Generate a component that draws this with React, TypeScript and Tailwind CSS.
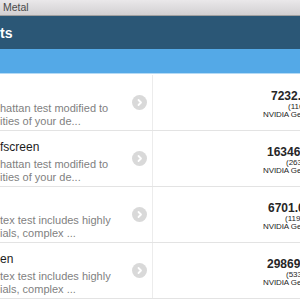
import React from "react";

type Row = {
  title: string;
  d1: string;
  d2: string;
  num: string;
  numPl: string;
  sub: string;
  subPl: string;
};

const rows: Row[] = [
  { title: "", d1: "hattan test modified to", d2: "ities of your de...", num: "7232.", numPl: "pl-[118px]", sub: "(116", subPl: "pl-[135px]" },
  { title: "fscreen", d1: "hattan test modified to", d2: "ities of your de...", num: "16346", numPl: "pl-[114px]", sub: "(263", subPl: "pl-[133px]" },
  { title: "", d1: "tex test includes highly", d2: "ials, complex ...", num: "6701.0", numPl: "pl-[115px]", sub: "(119", subPl: "pl-[132px]" },
  { title: "en", d1: "tex test includes highly", d2: "ials, complex ...", num: "29869", numPl: "pl-[114px]", sub: "(533", subPl: "pl-[133px]" },
];

function Chevron() {
  return (
    <div className="w-[15px] h-[15px] rounded-full bg-[#d9d9d9] flex items-center justify-center shrink-0">
      <svg width="9" height="9" viewBox="0 0 9 9">
        <path d="M3.5 2 L6 4.5 L3.5 7" fill="none" stroke="#ffffff" strokeWidth="1.8" strokeLinecap="round" strokeLinejoin="round" />
      </svg>
    </div>
  );
}

export default function App() {
  return (
    <div
      className="w-[300px] h-[300px] overflow-hidden bg-white"
      style={{ fontFamily: '"Liberation Sans", Arial, sans-serif' }}
    >
      <div className="h-[16px] bg-gradient-to-b from-[#eae8ea] to-[#d2d0d2] border-b border-[#a0a0a0] pl-[3px] text-[10.5px] leading-[15px] text-[#4a4a4a] whitespace-nowrap">
        Metal
      </div>
      <div className="h-[33px] bg-[#2b5776] flex items-center pt-[1px]">
        <span className="text-white font-bold text-[14px] leading-[14px] whitespace-nowrap">ts</span>
      </div>
      <div className="h-[25px] bg-[#54a9e7] border-b border-[#b4daf5]" />
      <div className="h-[1px]" />
      {rows.map((r, i) => (
        <div key={i} className="h-[56px] flex border-b border-[#e3e3e3]">
          <div className="w-[152px] flex items-center pr-[5px] shrink-0">
            <div className="flex-1 flex flex-col self-start pt-[9px] whitespace-nowrap overflow-hidden">
              <div className="text-[12px] leading-[14px] h-[14px] text-[#1c1c1c]">{r.title}</div>
              <div className="mt-[4px] text-[11px] leading-[13px] text-[#7f7f7f]">{r.d1}</div>
              <div className="text-[11px] leading-[13px] text-[#7f7f7f]">{r.d2}</div>
            </div>
            <Chevron />
          </div>
          <div className="w-[1px] bg-[#ececec] shrink-0" />
          <div className="flex-1 flex flex-col pt-[15px] whitespace-nowrap overflow-hidden text-[#262626]">
            <div className={`${r.numPl} text-[12px] leading-[13px] font-bold`}>{r.num}</div>
            <div className={`${r.subPl} text-[8px] leading-[8px]`}>{r.sub}</div>
            <div className="pl-[110px] text-[8px] leading-[8px] tracking-[-0.1px]">NVIDIA Ge</div>
          </div>
        </div>
      ))}
    </div>
  );
}
